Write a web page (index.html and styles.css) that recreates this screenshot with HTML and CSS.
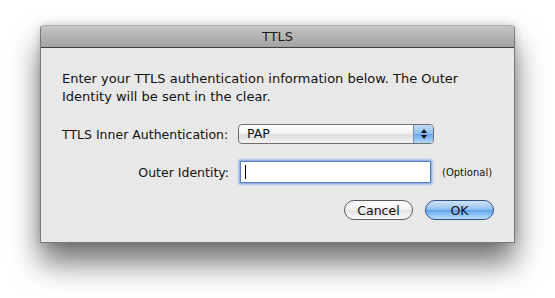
FILE: index.html
```html
<!DOCTYPE html>
<html>
<head>
<meta charset="utf-8">
<link rel="stylesheet" href="styles.css">
</head>
<body>
<div class="window">
  <div class="titlebar">TTLS</div>
  <div class="content">
    <p class="intro">Enter your TTLS authentication information below. The Outer Identity will be sent in the clear.</p>
    <div class="row row-select">
      <label class="label">TTLS Inner Authentication:</label>
      <div class="select">
        <span class="select-text">PAP</span>
        <span class="select-arrows">
          <svg width="8" height="12" viewBox="0 0 8 12"><path d="M4 1 L7 5 L1 5 Z M4 11 L7 7 L1 7 Z" fill="#111"/></svg>
        </span>
      </div>
    </div>
    <div class="row row-input">
      <label class="label label-outer">Outer Identity:</label>
      <div class="input"><span class="caret"></span></div>
      <span class="optional">(Optional)</span>
    </div>
    <div class="buttons">
      <button class="btn btn-cancel">Cancel</button>
      <button class="btn btn-ok">OK</button>
    </div>
  </div>
</div>
</body>
</html>
```
FILE: styles.css
```css
html {
  margin: 0;
  padding: 0;
  background: #ffffff;
  height: 100%;
}
body {
  margin: 0;
  min-height: 100%;
  box-sizing: border-box;
  padding: 25px 0 0 40px;
  font-family: "DejaVu Sans", "Liberation Sans", sans-serif;
  font-size: 12.5px;
  color: #111;
}
.window {
  width: 473px;
  height: 216px;
  border: 1px solid #7a7a7a;
  border-top-color: #b0b0b0;
  border-radius: 4px 4px 0 0;
  background: #e8e8e8;
  box-shadow: 0 20px 30px rgba(0,0,0,0.55), 0 0 10px rgba(0,0,0,0.18);
  display: flex;
  flex-direction: column;
}
.titlebar {
  height: 21px;
  line-height: 21px;
  text-align: center;
  font-size: 13px;
  color: #1a1a1a;
  background: linear-gradient(#c6c6c6, #a2a2a2);
  border-bottom: 1px solid #3f3f3f;
  border-radius: 3px 3px 0 0;
}
.content {
  padding: 22px 20px 0 21px;
  display: flex;
  flex-direction: column;
}
.intro {
  margin: 0;
  font-size: 13px;
  line-height: 18px;
  width: 440px;
}
.row {
  display: flex;
  align-items: center;
}
.row-select {
  margin-top: 18px;
}
.label {
  flex-shrink: 0;
  white-space: nowrap;
  width: 166px;
  text-align: right;
  padding-right: 10px;
}
.select {
  flex-shrink: 0;
  width: 194px;
  height: 18px;
  border: 1px solid #707070;
  border-radius: 4px;
  background: linear-gradient(#ffffff, #f0f0f0 50%, #dcdcdc 51%, #f4f4f4);
  display: flex;
  overflow: hidden;
}
.select-text {
  flex: 1;
  padding-left: 8px;
  line-height: 18px;
  font-size: 12.5px;
}
.select-arrows {
  width: 19px;
  border-left: 1px solid #7b8fb3;
  background: linear-gradient(#c5dcf6, #8cbbee 50%, #6aa5e8 51%, #b4d8fb);
  display: flex;
  align-items: center;
  justify-content: center;
}
.row-input {
  margin-top: 17px;
}
.label-outer {
  width: 167px;
  padding-right: 10px;
}
.input {
  flex-shrink: 0;
  width: 189px;
  height: 20px;
  background: #fff;
  border: 1px solid #5c7fb9;
  box-shadow: 0 0 0 1px #8fb3e6, 0 0 2px 2px #a9c6ef;
  border-radius: 1px;
  display: flex;
  align-items: center;
  margin-left: 1px;
}
.caret {
  width: 1px;
  height: 14px;
  background: #000;
  margin-left: 4px;
}
.optional {
  white-space: nowrap;
  font-size: 10px;
  margin-left: 11px;
}
.buttons {
  display: flex;
  justify-content: flex-end;
  gap: 12px;
  margin-top: 17px;
}
.btn {
  font-family: "DejaVu Sans", "Liberation Sans", sans-serif;
  font-size: 12.5px;
  height: 20px;
  width: 69px;
  border-radius: 10px;
  padding: 0;
  color: #111;
}
.btn-cancel {
  border: 1px solid #5a5a5a;
  background: linear-gradient(#ffffff, #f2f2f2 50%, #e2e2e2 51%, #fafafa);
}
.btn-ok {
  border: 1px solid #2e4f8c;
  background: linear-gradient(#d0e4fa, #8cbdf0 50%, #5ea2ea 51%, #b8e2fd);
}
```
